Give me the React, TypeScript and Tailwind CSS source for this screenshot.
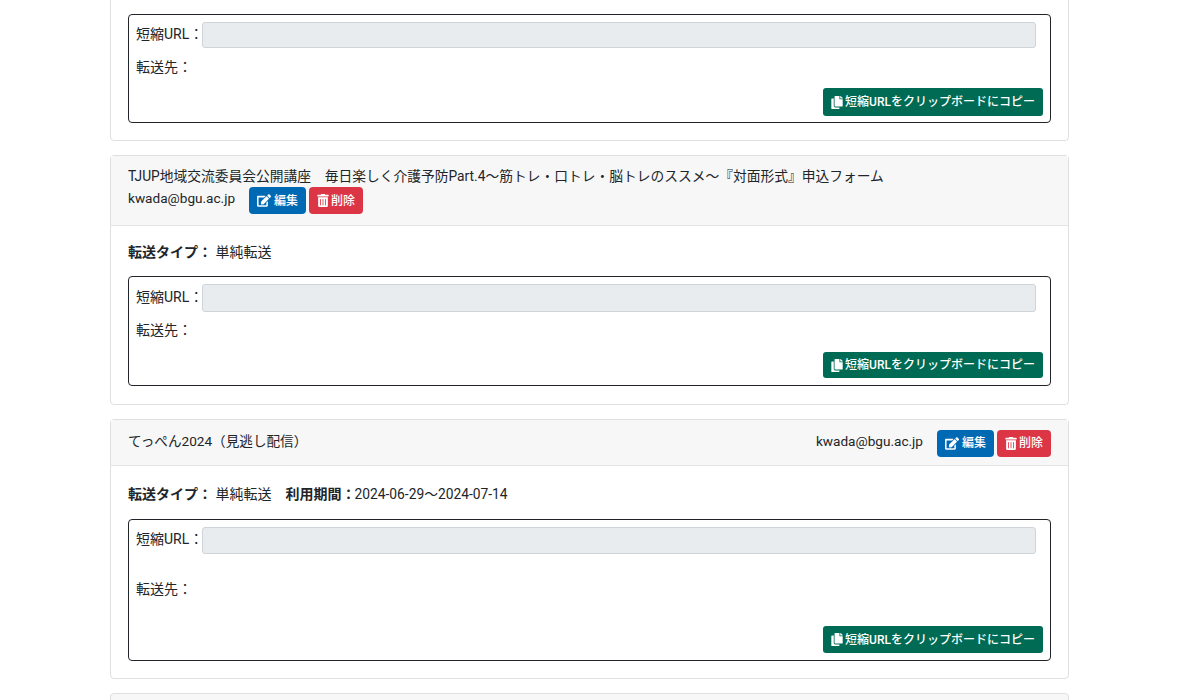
import React from 'react';
import { FaEdit, FaTrashAlt, FaCopy } from 'react-icons/fa';

const fontStack = "font-['Roboto','Noto_Sans_CJK_JP',sans-serif]";

function EditButtons() {
  return (
    <span className="inline-flex gap-[3px]">
      <button className="flex h-[27px] w-[57px] items-center justify-center gap-[3px] rounded-[4px] bg-[#0069b4] text-[12px] font-medium text-white">
        <FaEdit className="h-[13px] w-[14px]" />
        編集
      </button>
      <button className="flex h-[27px] w-[54px] items-center justify-center gap-[2px] rounded-[4px] bg-[#dc3545] text-[12px] font-medium text-white">
        <FaTrashAlt className="h-[13px] w-[12px]" />
        削除
      </button>
    </span>
  );
}

function UrlBox({ height, inputHeight, destGap, buttonHeight, bottom }: { height: string; inputHeight: string; destGap: string; buttonHeight: string; bottom: string }) {
  return (
    <div className={`flex flex-col rounded-[4px] border border-[#212529] px-[7px] pt-[7px] ${bottom} ${height}`}>
      <div className="flex items-center">
        <span className="w-[66px] shrink-0 pb-[2px] text-[14px] whitespace-nowrap text-[#212529]">短縮URL：</span>
        <div className={`mr-[7px] flex-1 rounded-[3px] border border-[#ced4da] bg-[#e9ecef] ${inputHeight}`}></div>
      </div>
      <div className={`text-[14px] text-[#212529] ${destGap}`}>転送先：</div>
      <div className="mt-auto flex justify-end">
        <button className={`flex w-[220px] items-center justify-center gap-[2px] rounded-[3px] bg-[#006b54] text-[12px] font-medium whitespace-nowrap text-white ${buttonHeight}`}>
          <FaCopy className="h-[13px] w-[12px]" />
          短縮URLをクリップボードにコピー
        </button>
      </div>
    </div>
  );
}

export default function App() {
  return (
    <div className={`h-[700px] overflow-hidden bg-white ${fontStack}`}>
      <div className="-mt-[20px] ml-[110px] flex w-[959px] flex-col gap-[14px]">
        <div className="rounded-[4px] border border-[#dfdfdf] bg-white px-[17px] pt-[33px] pb-[17px]">
          <UrlBox height="h-[109px]" inputHeight="h-[26px]" destGap="mt-[9px]" buttonHeight="h-[28px]" bottom="pb-[6px]" />
        </div>

        <div className="rounded-[4px] border border-[#dfdfdf] bg-white">
          <div className="h-[70px] border-b border-[#e5e5e5] bg-[#f7f7f7] px-[17px] pt-[10px] text-[#212529]">
            <div className="text-[13.75px] leading-[20px] whitespace-nowrap">TJUP地域交流委員会公開講座　毎日楽しく介護予防Part.4～筋トレ・口トレ・脳トレのススメ～『対面形式』申込フォーム</div>
            <div className="mt-[1px] flex items-center">
              <span className="mr-[14px] pb-[5px] text-[13.6px] leading-[20px]">kwada@bgu.ac.jp</span>
              <EditButtons />
            </div>
          </div>
          <div className="px-[17px] pt-[16px] pb-[18px]">
            <div className="mb-[14px] text-[14px] leading-[20px] text-[#212529]">
              <b>転送タイプ：</b> 単純転送
            </div>
            <UrlBox height="h-[110px]" inputHeight="h-[28px]" destGap="mt-[8px]" buttonHeight="h-[26px]" bottom="pb-[7px]" />
          </div>
        </div>

        <div className="rounded-[4px] border border-[#dfdfdf] bg-white">
          <div className="flex h-[46px] items-center justify-between border-b border-[#e5e5e5] bg-[#f7f7f7] px-[17px] pt-[1px] text-[#212529]">
            <span className="pb-[3px] text-[13.6px]">てっぺん2024（見逃し配信）</span>
            <span className="flex items-center">
              <span className="mr-[14px] pb-[3px] text-[13.6px]">kwada@bgu.ac.jp</span>
              <EditButtons />
            </span>
          </div>
          <div className="px-[17px] pt-[18px] pb-[17px]">
            <div className="mb-[15px] text-[14px] leading-[20px] text-[#212529]">
              <b>転送タイプ：</b> 単純転送　<b>利用期間：</b><span className="-ml-[1px] text-[13.8px]">2024-06-29～2024-07-14</span>
            </div>
            <UrlBox height="h-[142px]" inputHeight="h-[27px]" destGap="mt-[25px]" buttonHeight="h-[27px]" bottom="pb-[7px]" />
          </div>
        </div>

        <div className="h-[40px] rounded-[4px] border border-[#dfdfdf] bg-[#f7f7f7]"></div>
      </div>
    </div>
  );
}
